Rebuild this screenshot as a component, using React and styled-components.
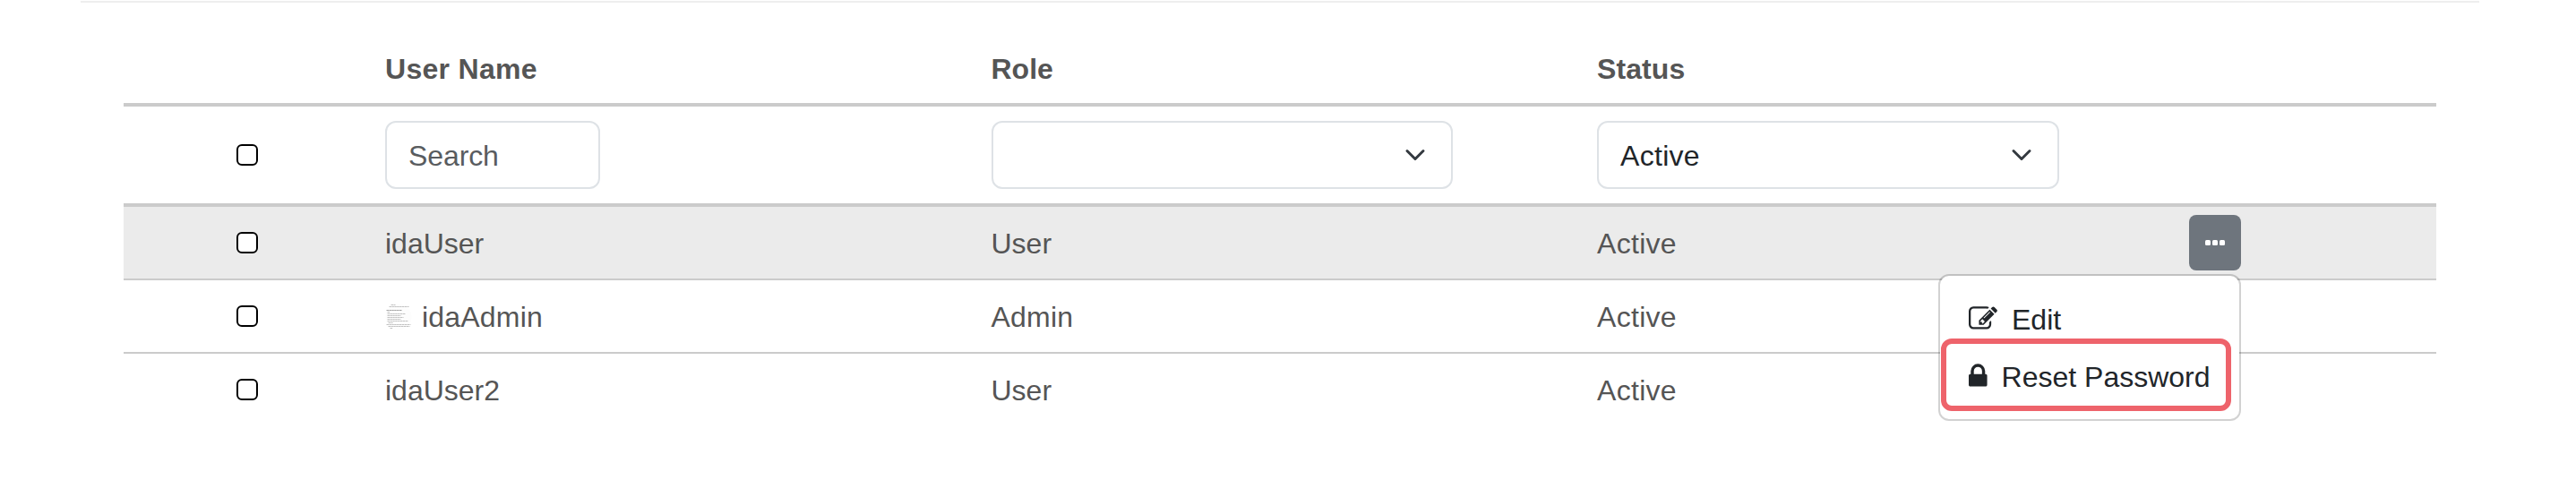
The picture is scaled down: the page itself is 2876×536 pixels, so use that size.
import React from "react";
import styled, { createGlobalStyle } from "styled-components";

const GlobalStyle = createGlobalStyle`
  *, *::before, *::after { box-sizing: border-box; }
  body {
    margin: 0;
    background: #fff;
    color: #555;
    font-family: "Liberation Sans", Arial, sans-serif;
    font-size: 32px;
    line-height: 48px;
  }
`;

const Page = styled.main`
  height: 536px;
  padding: 1px 108px 0 90px;
  overflow: hidden;
`;

const Panel = styled.section`
  border-top: 2px solid #eee;
  padding: 36px 48px 0;
`;

const Table = styled.div`
  display: flex;
  flex-direction: column;
`;

const Row = styled.div`
  display: grid;
  grid-template-columns: 276px repeat(3, 676.5px) 1fr;
  align-items: center;
  height: ${(p) => p.$height}px;
  background: ${(p) => (p.$active ? "#ebebeb" : "transparent")};
  border-bottom: ${(p) => p.$line}px solid #cbcbcb;
`;

const Cell = styled.div`
  display: flex;
  align-items: center;
  gap: 11px;
  padding: 2px 16px 0;
`;

const HeadCell = styled(Cell)`
  padding-top: 0;
  font-weight: 700;
`;

const FilterCell = styled(Cell)`
  padding-top: 0;
`;

const CheckCell = styled.div`
  display: flex;
  justify-content: center;
`;

const ActionCell = styled.div`
  position: relative;
`;

const Text = styled.span`
  letter-spacing: ${(p) => p.$track || 0}px;
  white-space: nowrap;
`;

const Checkbox = styled.input.attrs({ type: "checkbox" })`
  appearance: none;
  width: 24px;
  height: 24px;
  margin: 0;
  border: 2px solid #000;
  border-radius: 6px;
  background: #fff;
`;

const SearchInput = styled.input`
  width: 240px;
  height: 76px;
  padding: 2px 24px 0;
  border: 2px solid #dee2e6;
  border-radius: 12px;
  background: #fff;
  font: inherit;
  letter-spacing: -0.1px;
  &::placeholder {
    color: #595c5f;
    opacity: 1;
  }
`;

const SelectButton = styled.button`
  display: flex;
  align-items: center;
  justify-content: space-between;
  width: ${(p) => p.$width}px;
  height: 76px;
  padding: 0 28px 0 24px;
  border: 2px solid #dee2e6;
  border-radius: 12px;
  background: #fff;
  color: #212529;
  font: inherit;
`;

const SelectValue = styled(Text)`
  padding-top: 2px;
`;

const MoreButton = styled.button`
  display: flex;
  align-items: center;
  justify-content: center;
  gap: 2px;
  width: 58px;
  height: 62px;
  margin-left: 0.5px;
  padding: 0;
  border: 0;
  border-radius: 8px;
  background: #6e757d;
`;

const Dot = styled.span`
  width: 6px;
  height: 6px;
  border-radius: 1.5px;
  background: #fff;
`;

const Menu = styled.div`
  position: absolute;
  top: 66px;
  left: -279.5px;
  z-index: 2;
  width: 338px;
  height: 164px;
  padding: 16px 0;
  border: 2px solid rgba(0, 0, 0, 0.175);
  border-radius: 12px;
  background: #fff;
  background-clip: padding-box;
`;

const MenuItem = styled.div`
  display: flex;
  align-items: center;
  gap: ${(p) => p.$gap}px;
  height: 64px;
  padding-left: 32px;
  color: #212529;
`;

const MenuLabel = styled(Text)`
  padding-top: 2px;
`;

const Highlight = styled.div`
  position: absolute;
  top: 70px;
  left: 1px;
  width: 324px;
  height: 81px;
  border: 6px solid #ee636b;
  border-radius: 12px;
`;

const Chevron = () => (
  <svg width="24" height="24" viewBox="0 0 16 16" fill="none" stroke="#343a40" strokeWidth="2" strokeLinecap="round" strokeLinejoin="round">
    <path d="m2 5 6 6 6-6" />
  </svg>
);

const EditIcon = () => (
  <svg width="32" height="32" viewBox="0 0 1792 1792" fill="currentColor">
    <path d="M888 1184l116-116-152-152-116 116v56h96v96h56zm440-720q-16-16-33 1l-350 350q-17 17-1 33t33-1l350-350q17-17 1-33zm80 594v190q0 119-84.5 203.5t-203.5 84.5h-832q-119 0-203.5-84.5t-84.5-203.5v-832q0-119 84.5-203.5t203.5-84.5h832q63 0 117 25 15 7 18 23 3 17-9 29l-49 49q-14 14-32 8-23-6-45-6h-832q-66 0-113 47t-47 113v832q0 66 47 113t113 47h832q66 0 113-47t47-113v-126q0-13 9-22l64-64q15-15 35-7t20 29zm-96-738l288 288-672 672h-288v-288zm444 132l-92 92-288-288 92-92q28-28 68-28t68 28l152 152q28 28 28 68t-28 68z" />
  </svg>
);

const LockIcon = () => (
  <svg width="20.57" height="32" viewBox="320 0 1152 1792" fill="currentColor">
    <path d="M640 768h512v-192q0-106-75-181t-181-75-181 75-75 181v192zm832 96v576q0 40-28 68t-68 28h-960q-40 0-68-28t-28-68v-576q0-40 28-68t68-28h32v-192q0-184 132-316t316-132 316 132 132 316v192h32q40 0 68 28t28 68z" />
  </svg>
);

const avatarLines = [
  [6.5, 1.5, 5], [4.5, 3.5, 22], [1.5, 7.5, 17], [2.5, 9.5, 3], [2.5, 11.5, 20],
  [2.5, 13.5, 15], [2.5, 15.5, 18], [2.5, 17.5, 15], [2.5, 19.5, 23], [3.5, 21.5, 5],
  [1.5, 23.5, 27], [3.5, 25.5, 24], [5.5, 27.5, 3],
];

const Avatar = () => (
  <svg width="30" height="30" viewBox="0 0 30 30" stroke="#8c8c8c" strokeWidth="0.8">
    <circle cx="15" cy="15" r="14.5" fill="#fdfdfd" stroke="none" />
    {avatarLines.map(([x, y, w]) => (
      <path key={y} d={`M${x} ${y}h${w}`} strokeDasharray="2.5 0.4" opacity={w === 17 ? 1 : 0.65} />
    ))}
  </svg>
);

const users = [
  { name: "idaUser", role: "User", line: 2, height: 82, active: true },
  { name: "idaAdmin", role: "Admin", line: 2, height: 82, avatar: true },
  { name: "idaUser2", role: "User", line: 0, height: 80 },
];

const RowMenu = () => (
  <ActionCell>
    <MoreButton aria-label="Actions"><Dot /><Dot /><Dot /></MoreButton>
    <Menu>
      <MenuItem $gap={16}><EditIcon /><MenuLabel>Edit</MenuLabel></MenuItem>
      <MenuItem $gap={16}><LockIcon /><MenuLabel>Reset Password</MenuLabel></MenuItem>
      <Highlight />
    </Menu>
  </ActionCell>
);

export default function App() {
  return (
    <>
      <GlobalStyle />
      <Page>
        <Panel>
          <Table>
            <Row $height={80} $line={4}>
              <span />
              <HeadCell><Text $track={0.3}>User Name</Text></HeadCell>
              <HeadCell><Text>Role</Text></HeadCell>
              <HeadCell><Text $track={0.1}>Status</Text></HeadCell>
            </Row>
            <Row $height={112} $line={4}>
              <CheckCell><Checkbox /></CheckCell>
              <FilterCell><SearchInput placeholder="Search" /></FilterCell>
              <FilterCell><SelectButton $width={515} aria-label="Role"><span /><Chevron /></SelectButton></FilterCell>
              <FilterCell><SelectButton $width={516}><SelectValue $track={0.3}>Active</SelectValue><Chevron /></SelectButton></FilterCell>
            </Row>
            {users.map((u) => (
              <Row key={u.name} $height={u.height} $line={u.line} $active={u.active}>
                <CheckCell><Checkbox /></CheckCell>
                <Cell>{u.avatar && <Avatar />}<Text $track={u.avatar ? 0.2 : 0}>{u.name}</Text></Cell>
                <Cell><Text $track={u.avatar ? 0.2 : 0}>{u.role}</Text></Cell>
                <Cell><Text $track={0.3}>Active</Text></Cell>
                {u.active && <RowMenu />}
              </Row>
            ))}
          </Table>
        </Panel>
      </Page>
    </>
  );
}
